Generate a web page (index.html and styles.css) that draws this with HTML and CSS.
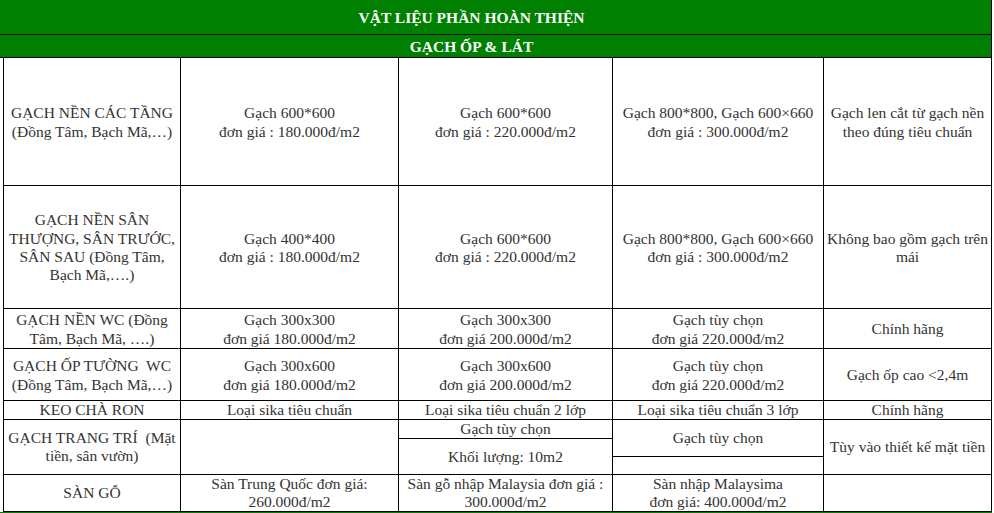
FILE: index.html
```html
<!DOCTYPE html>
<html lang="vi">
<head>
<meta charset="utf-8">
<title>Vật liệu phần hoàn thiện</title>
<link rel="stylesheet" href="styles.css">
</head>
<body>
<div class="sheet">
  <div class="band band-title">VẬT LIỆU PHẦN HOÀN THIỆN</div>
  <div class="band band-sub">GẠCH ỐP &amp; LÁT</div>
  <table class="grid">
    <colgroup>
      <col class="c1"><col class="c2"><col class="c3"><col class="c4"><col class="c5">
    </colgroup>
    <tbody>
      <tr class="r1">
        <td>GẠCH NỀN CÁC TẦNG<br>(Đồng Tâm, Bạch Mã,…)</td>
        <td>Gạch 600*600<br>đơn giá : 180.000đ/m2</td>
        <td>Gạch 600*600<br>đơn giá : 220.000đ/m2</td>
        <td>Gạch 800*800, Gạch 600×660<br>đơn giá : 300.000đ/m2</td>
        <td>Gạch len cắt từ gạch nền<br>theo đúng tiêu chuẩn</td>
      </tr>
      <tr class="r2">
        <td>GẠCH NỀN SÂN<br>THƯỢNG, SÂN TRƯỚC,<br>SÂN SAU (Đồng Tâm,<br>Bạch Mã,….)</td>
        <td>Gạch 400*400<br>đơn giá : 180.000đ/m2</td>
        <td>Gạch 600*600<br>đơn giá : 220.000đ/m2</td>
        <td>Gạch 800*800, Gạch 600×660<br>đơn giá : 300.000đ/m2</td>
        <td>Không bao gồm gạch trên<br>mái</td>
      </tr>
      <tr class="r3">
        <td>GẠCH NỀN WC (Đồng<br>Tâm, Bạch Mã, ….)</td>
        <td>Gạch 300x300<br>đơn giá 180.000đ/m2</td>
        <td>Gạch 300x300<br>đơn giá 200.000đ/m2</td>
        <td>Gạch tùy chọn<br>đơn giá 220.000đ/m2</td>
        <td>Chính hãng</td>
      </tr>
      <tr class="r4">
        <td>GẠCH ỐP TƯỜNG&nbsp; WC<br>(Đồng Tâm, Bạch Mã,…)</td>
        <td>Gạch 300x600<br>đơn giá 180.000đ/m2</td>
        <td>Gạch 300x600<br>đơn giá 200.000đ/m2</td>
        <td>Gạch tùy chọn<br>đơn giá 220.000đ/m2</td>
        <td>Gạch ốp cao &lt;2,4m</td>
      </tr>
      <tr class="r5">
        <td>KEO CHÀ RON</td>
        <td>Loại sika tiêu chuẩn</td>
        <td>Loại sika tiêu chuẩn 2 lớp</td>
        <td>Loại sika tiêu chuẩn 3 lớp</td>
        <td>Chính hãng</td>
      </tr>
      <tr class="r6a">
        <td rowspan="3">GẠCH TRANG TRÍ&nbsp; (Mặt<br>tiền, sân vườn)</td>
        <td rowspan="3"></td>
        <td>Gạch tùy chọn</td>
        <td rowspan="2">Gạch tùy chọn</td>
        <td rowspan="3">Tùy vào thiết kế mặt tiền</td>
      </tr>
      <tr class="r6b">
        <td rowspan="2">Khối lượng: 10m2</td>
      </tr>
      <tr class="r6c">
        <td></td>
      </tr>
      <tr class="r7">
        <td>SÀN GỖ</td>
        <td>Sàn Trung Quốc đơn giá:<br>260.000đ/m2</td>
        <td>Sàn gỗ nhập Malaysia đơn giá :<br>300.000đ/m2</td>
        <td>Sàn nhập Malaysima<br>đơn giá: 400.000đ/m2</td>
        <td></td>
      </tr>
    </tbody>
  </table>
  <div class="band band-next"></div>
</div>
</body>
</html>
```

FILE: styles.css
```css
html, body {
  margin: 0;
  padding: 0;
  background: #ffffff;
}

body {
  font-family: "Liberation Serif", "Times New Roman", serif;
  font-size: 15.5px;
  color: #333333;
  overflow: hidden;
}

.sheet {
  width: 992px;
}

.band {
  box-sizing: border-box;
  width: 992px;
  background: #008000;
  color: #ffffff;
  font-weight: bold;
  text-align: center;
  border-right: 1px solid #000000;
  padding-right: 48px;
}

.band-title {
  height: 35px;
  padding-top: 2px;
  line-height: 32px;
  border-bottom: 1px solid #000000;
}

.band-sub {
  height: 23px;
  padding-top: 2px;
  line-height: 20px;
  border-bottom: 1px solid #000000;
}

.band-next {
  height: 2px;
  border-right: 0;
}

.grid {
  box-sizing: border-box;
  width: 989px;
  margin-left: 3px;
  table-layout: fixed;
  border-collapse: separate;
  border-spacing: 0;
  border-left: 1px solid #000000;
}

.c1 { width: 177px; }
.c2 { width: 218px; }
.c3 { width: 214px; }
.c4 { width: 211px; }
.c5 { width: 168px; }

.grid td {
  box-sizing: border-box;
  padding: 0 1px;
  border-right: 1px solid #000000;
  border-bottom: 1px solid #000000;
  text-align: center;
  vertical-align: middle;
  line-height: 18.4px;
  white-space: nowrap;
  overflow: hidden;
}

.r1 td,
.r2 td,
.r3 td,
.r4 td {
  padding-top: 2px;
}

.r1 { height: 128px; }
.r2 { height: 123px; }
.r3 { height: 40px; }
.r4 { height: 52px; }
.r5 { height: 19px; }
.r6a { height: 19px; }
.r6b { height: 18px; }
.r6c { height: 18px; }
.r7 { height: 36px; }

.r5 td,
.r6a td,
.r6b td,
.r6c td,
.r7 td {
  line-height: 18px;
}
```
